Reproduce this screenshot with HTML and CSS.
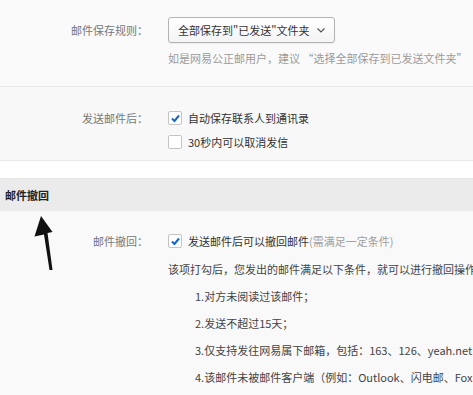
FILE: index.html
```html
<!DOCTYPE html>
<html lang="zh-CN">
<head>
    <meta charset="UTF-8">
    <meta name="viewport" content="width=device-width, initial-scale=1.0">
    <title>邮件设置</title>
    <link rel="stylesheet" href="styles.css">
</head>
<body>
    <div class="page">
        <div class="section save">
            <div class="row">
                <div class="label">邮件保存规则：</div>
                <div class="field">
                    <div class="select">全部保存到"已发送"文件夹
                        <svg class="chev" width="8" height="5" viewBox="0 0 8 5"><polyline points="0.5,0.5 4,4 7.5,0.5" fill="none" stroke="#555" stroke-width="1.2"/></svg>
                    </div>
                    <div class="hint">如是网易公正邮用户，建议 “选择全部保存到已发送文件夹”</div>
                </div>
            </div>
        </div>

        <div class="section send">
            <div class="row">
                <div class="label">发送邮件后：</div>
                <div class="field">
                    <div class="check-line"><span class="box on"><svg width="11" height="11" viewBox="0 0 11 11"><polyline points="2,5.5 4.5,8 9,2.5" fill="none" stroke="#1467c8" stroke-width="2"/></svg></span>自动保存联系人到通讯录</div>
                    <div class="check-line"><span class="box"></span>30秒内可以取消发信</div>
                </div>
            </div>
        </div>

        <div class="spacer"></div>

        <div class="bar">邮件撤回</div>

        <div class="section recall">
            <div class="row">
                <div class="label">邮件撤回：</div>
                <div class="field">
                    <div class="check-line"><span class="box on"><svg width="11" height="11" viewBox="0 0 11 11"><polyline points="2,5.5 4.5,8 9,2.5" fill="none" stroke="#1467c8" stroke-width="2"/></svg></span>发送邮件后可以撤回邮件<span class="muted">(需满足一定条件)</span></div>
                    <div class="desc">
                        <p>该项打勾后，您发出的邮件满足以下条件，就可以进行撤回操作</p>
                        <p class="item">1.对方未阅读过该邮件；</p>
                        <p class="item">2.发送不超过15天；</p>
                        <p class="item">3.仅支持发往网易属下邮箱，包括：163、126、yeah.net</p>
                        <p class="item">4.该邮件未被邮件客户端（例如：Outlook、闪电邮、Foxmail</p>
                    </div>
                </div>
            </div>
        </div>

        <svg class="arrow" width="30" height="60" viewBox="30 214 30 60">
            <polygon points="41,216 52.5,232 47.5,233 52.5,270 49.5,270 44,234.5 34.5,236.5" fill="#111"/>
        </svg>
    </div>
</body>
</html>
```

FILE: styles.css
```css
body{
    margin: 0;
    font-family: "Noto Sans CJK SC", "Noto Sans", sans-serif;
    font-size: 11px;
    color: #333;
    background: #f9f9f9;
    overflow: hidden;
}
.page{
    position: relative;
    width: 473px;
    height: 395px;
    overflow: hidden;
}
.section{
    border-bottom: 1px solid #e9e9e9;
}
.save{
    background: #fafafa;
    padding: 17px 0 20px;
}
.send{
    background: #f8f8f8;
    padding: 19px 0 6px;
}
.recall{
    border-bottom: none;
    padding: 18px 0 0;
}
.row{
    display: flex;
    gap: 18px;
}
.label{
    width: 148px;
    flex: none;
    text-align: right;
    color: #777;
    line-height: 24px;
}
.save .label{
    line-height: 26px;
}
.field{
    white-space: nowrap;
    margin-left: 2px;
}
.select{
    display: inline-flex;
    align-items: center;
    gap: 8px;
    height: 24px;
    padding: 0 9px 0 9px;
    border: 1px solid #b3b3b3;
    border-radius: 3px;
    background: linear-gradient(#ffffff, #f4f4f4);
    color: #333;
    box-shadow: 0 1px 1px rgba(0,0,0,0.06);
}
.chev{
    flex: none;
    margin-top: 1px;
}
.hint{
    margin-top: 7px;
    line-height: 16px;
    color: #9a9a9a;
}
.check-line{
    display: flex;
    align-items: center;
    height: 24px;
}
.box{
    width: 12px;
    height: 12px;
    flex: none;
    margin-right: 6px;
    border: 1px solid #c4c4c4;
    border-radius: 2px;
    background: #fff;
    display: flex;
    align-items: center;
    justify-content: center;
}
.muted{
    color: #a0a0a0;
}
.spacer{
    height: 17px;
    background: #fff;
    border-bottom: 1px solid #e6e6e6;
}
.bar{
    height: 32px;
    line-height: 32px;
    padding-left: 5px;
    background: #ebebeb;
    font-weight: bold;
    color: #222;
}
.desc{
    margin-top: 3px;
}
.desc p{
    margin: 0;
    line-height: 27px;
    color: #444;
}
.desc .item{
    padding-left: 27px;
}
.arrow{
    position: absolute;
    left: 30px;
    top: 214px;
}
```
